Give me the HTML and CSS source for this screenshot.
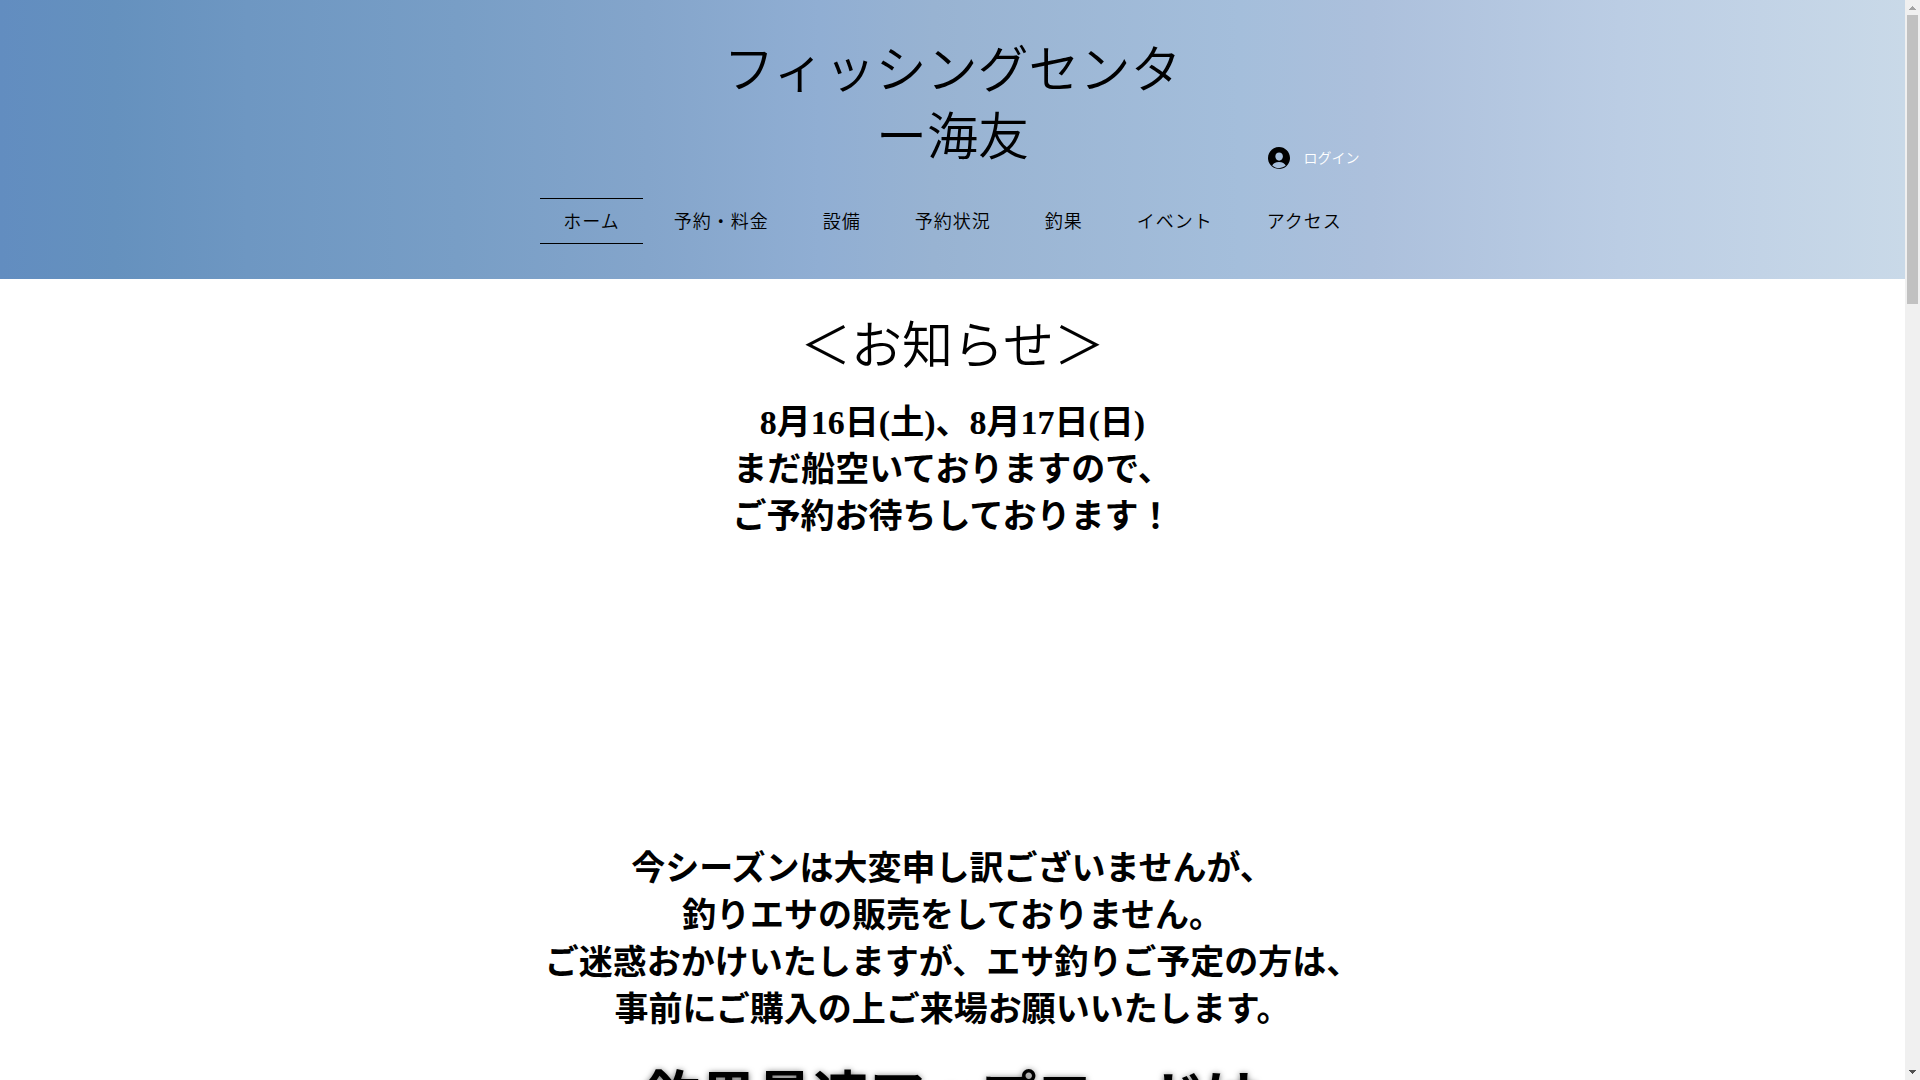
FILE: index.html
```html
<!DOCTYPE html>
<html lang="ja">
<head>
	<meta charset="utf-8">
	<title>フィッシングセンター海友</title>
	<link rel="stylesheet" href="styles.css">
</head>
<body>
	<div class="page">

		<header class="header">
			<div class="header-top">
				<h1 class="site-title">フィッシングセンター海友</h1>
				<button class="login" type="button">
					<svg class="avatar" viewBox="0 0 50 50" aria-hidden="true">
						<path d="M25 48.077c-5.924 0-11.31-2.252-15.396-5.921 2.254-5.362 7.492-8.267 15.373-8.267 7.889 0 13.139 3.044 15.408 8.418-4.084 3.659-9.471 5.77-15.385 5.77m.278-35.3c4.927 0 8.611 3.812 8.611 8.878 0 5.21-3.875 9.456-8.611 9.456s-8.611-4.246-8.611-9.456c0-5.066 3.684-8.878 8.611-8.878M25 0C11.193 0 0 11.193 0 25c0 .915.056 1.816.152 2.705C1.52 40.257 12.121 50 25 50s23.48-9.743 24.848-22.295c.096-.889.152-1.79.152-2.705C50 11.193 38.807 0 25 0"/>
					</svg>
					<span>ログイン</span>
				</button>
			</div>

			<nav class="menu">
				<a class="active" href="#">ホーム</a>
				<a href="#">予約・料金</a>
				<a href="#">設備</a>
				<a href="#">予約状況</a>
				<a href="#">釣果</a>
				<a href="#">イベント</a>
				<a href="#">アクセス</a>
			</nav>
		</header>

		<main class="content">
			<h2 class="news-title">＜お知らせ＞</h2>
			<p class="news">
				8月16日(土)、8月17日(日)<br>
				まだ船空いておりますので、<br>
				ご予約お待ちしております！
			</p>
			<p class="news notice">
				今シーズンは大変申し訳ございませんが、<br>
				釣りエサの販売をしておりません。<br>
				ご迷惑おかけいたしますが、エサ釣りご予定の方は、<br>
				事前にご購入の上ご来場お願いいたします。
			</p>
			<h2 class="upload-title">釣果最速アップロードは</h2>
		</main>

	</div>

	<div class="scrollbar" aria-hidden="true">
		<svg class="arrow" viewBox="0 0 15 15"><path fill="#a3a3a3" d="M7 6h1v1h1v1h1v1h1v1H4V9h1V8h1V7h1z"/></svg>
		<div class="thumb"></div>
		<svg class="arrow" viewBox="0 0 15 15"><path fill="#505050" d="M4 5h7v1h-1v1H9v1H8v1H7V8H6V7H5V6H4z"/></svg>
	</div>
</body>
</html>
```
FILE: styles.css
```css
body {
	display: flex;
	height: 100vh;
	margin: 0;
	overflow: hidden;
	color: #000;
	font-family: "Liberation Serif", "Noto Sans CJK JP", serif;
}
h1, h2, p {
	margin: 0;
	text-align: center;
}
.page {
	flex: 1;
	overflow: hidden;
}

/* header */
.header {
	padding: 38px 0 35px;
	background: linear-gradient(90deg, #628dc0, #6591be 6%, #6e97c2 13%, #789ec6 24%, #84a5cb 34%, #90aed3 43%, #98b3d2 49%, #a4bedb 65%, #acc0dc 72%, #bbcde4 85%, #c9d9e8);
}
.header-top {
	display: grid;
	grid-template-columns: 1fr 480px 1fr;
	align-items: end;
}
.site-title {
	grid-column: 2;
	font-size: 51px;
	font-weight: 350;
	line-height: 67px;
}
.login {
	display: flex;
	align-items: center;
	gap: 14px;
	margin: 0 0 3px 75px;
	padding: 0;
	border: 0;
	background: none;
	color: #fff;
	font-family: "Liberation Sans", "Noto Sans CJK JP", sans-serif;
	font-size: 14px;
	font-weight: 350;
	line-height: 22px;
	cursor: pointer;
}
.avatar {
	width: 22px;
	height: 22px;
}
.menu {
	display: flex;
	justify-content: center;
	gap: 8px;
	margin-top: 26px;
}
.menu a {
	padding: 2px 23px 0;
	border: solid transparent;
	border-width: 1px 0;
	color: #000;
	font-size: 18px;
	font-weight: 350;
	letter-spacing: 1px;
	line-height: 42px;
	text-decoration: none;
}
.menu .active {
	border-color: #000;
}

/* news */
.content {
	padding-top: 35px;
}
.news-title {
	font-size: 51px;
	font-weight: 350;
	line-height: 67px;
}
.news {
	margin-top: 18px;
	font-size: 34px;
	font-weight: bold;
	line-height: 47px;
}
.notice {
	margin-top: 305px;
}
.upload-title {
	margin-top: 26px;
	font-size: 56px;
	line-height: 79px;
	text-shadow: 0 1px 6px rgba(0, 0, 0, .6);
}

/* scrollbar */
.scrollbar {
	display: flex;
	flex-direction: column;
	width: 15px;
	background: #f0f0f0;
}
.arrow {
	width: 15px;
	height: 15px;
}
.arrow:last-child {
	margin-top: auto;
}
.thumb {
	height: 26.8%;
	margin: 0 2px;
	background: #c1c1c1;
}
```
